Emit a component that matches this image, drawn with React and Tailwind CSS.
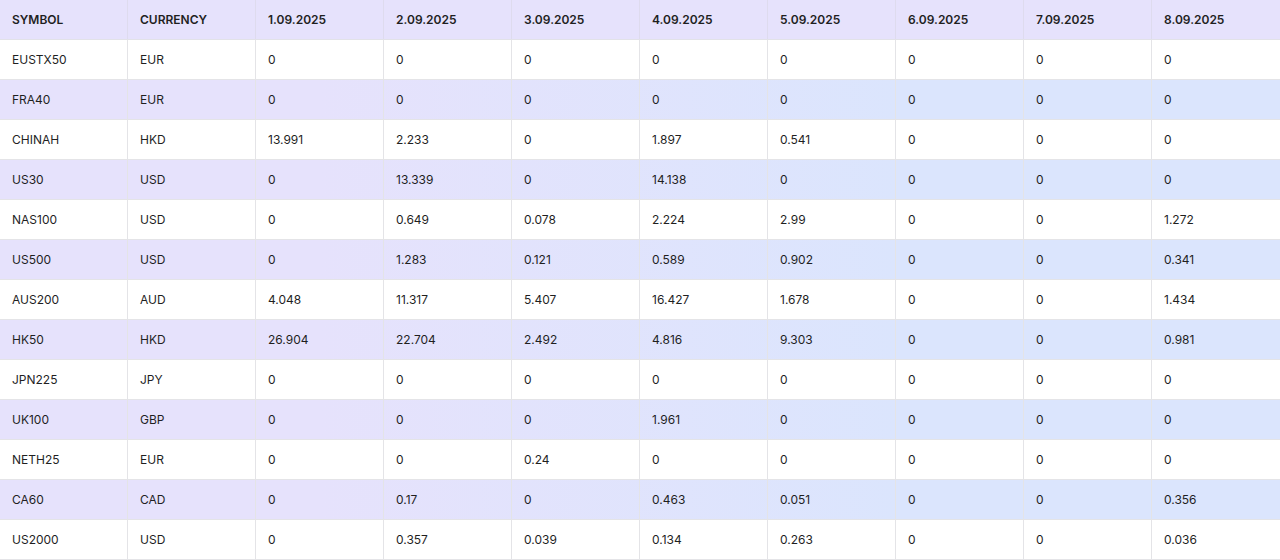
const cols=["SYMBOL","CURRENCY","1.09.2025","2.09.2025","3.09.2025","4.09.2025","5.09.2025","6.09.2025","7.09.2025","8.09.2025"];
const rows=[
["EUSTX50","EUR","0","0","0","0","0","0","0","0"],
["FRA40","EUR","0","0","0","0","0","0","0","0"],
["CHINAH","HKD","13.991","2.233","0","1.897","0.541","0","0","0"],
["US30","USD","0","13.339","0","14.138","0","0","0","0"],
["NAS100","USD","0","0.649","0.078","2.224","2.99","0","0","1.272"],
["US500","USD","0","1.283","0.121","0.589","0.902","0","0","0.341"],
["AUS200","AUD","4.048","11.317","5.407","16.427","1.678","0","0","1.434"],
["HK50","HKD","26.904","22.704","2.492","4.816","9.303","0","0","0.981"],
["JPN225","JPY","0","0","0","0","0","0","0","0"],
["UK100","GBP","0","0","0","1.961","0","0","0","0"],
["NETH25","EUR","0","0","0.24","0","0","0","0","0"],
["CA60","CAD","0","0.17","0","0.463","0.051","0","0","0.356"],
["US2000","USD","0","0.357","0.039","0.134","0.263","0","0","0.036"],
];
export default function App(){
return <div className="w-[1280px] h-[560px] overflow-hidden bg-white text-[12px] text-[#1f1f1f]" style={{fontFamily:"Inter, sans-serif"}}>
<div className="grid grid-cols-10 h-[40px] bg-[#e6e2fc] border-b border-[#e2e2e8]">
{cols.map((c,i)=><div key={i} className="flex items-center px-3 font-semibold border-r border-[#dedbee] last:border-r-0">{c}</div>)}
</div>
{rows.map((r,ri)=><div key={ri} className={"grid grid-cols-10 h-[40px] border-b border-[#e4e4e7] "+(ri%2? "bg-[linear-gradient(90deg,#e6e2fc_25%,#dbe5fd_70%)]":"bg-white")}>
{r.map((c,i)=><div key={i} className="flex items-center px-3 border-r border-[#e4e4e7] last:border-r-0">{c}</div>)}
</div>)}
</div>
}
